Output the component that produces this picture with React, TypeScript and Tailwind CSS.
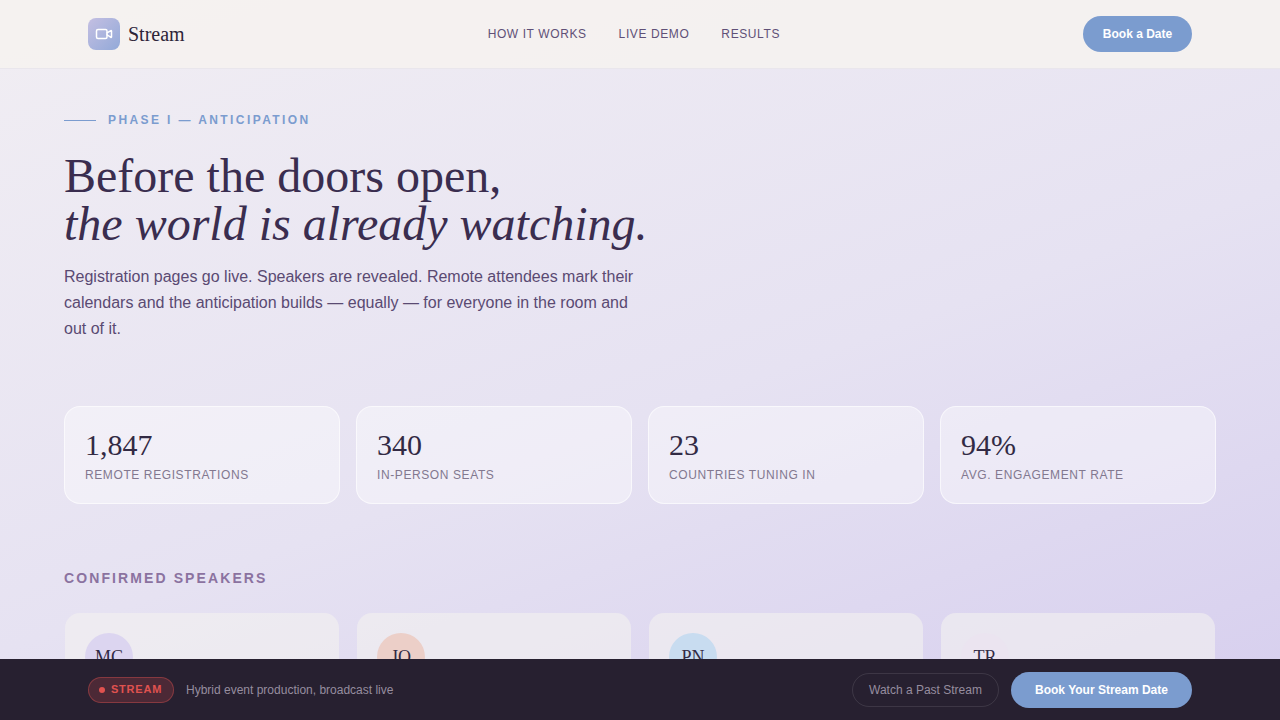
import { Video } from 'lucide-react';

const navLinks = ['HOW IT WORKS', 'LIVE DEMO', 'RESULTS'];

const stats = [
  { value: '1,847', label: 'REMOTE REGISTRATIONS' },
  { value: '340', label: 'IN-PERSON SEATS' },
  { value: '23', label: 'COUNTRIES TUNING IN' },
  { value: '94%', label: 'AVG. ENGAGEMENT RATE' },
];

const speakers = [
  { initials: 'MC', avatar: 'bg-[#dcd5f0]' },
  { initials: 'JO', avatar: 'bg-[#eccfc8]' },
  { initials: 'PN', avatar: 'bg-[#c8dcf0]' },
  { initials: 'TR', avatar: 'bg-[#ebe4f0]' },
];

const sans = "font-['Liberation_Sans',Arial,sans-serif]";
const serif = "font-['Liberation_Serif','Times_New_Roman',serif]";

const Nav = () => (
  <nav className="flex h-[69px] items-center justify-between border-b border-[#e9e6ec] bg-[#f5f2f0]/90 px-[88px]">
    <div className="flex items-center gap-2">
      <div className="flex h-8 w-8 items-center justify-center rounded-lg bg-gradient-to-br from-[#c4bfe2] to-[#92a9d8]">
        <Video size={18} color="#ffffff" strokeWidth={2} />
      </div>
      <span className={`${serif} text-xl text-[#2d2438]`}>Stream</span>
    </div>
    <div className={`${sans} flex items-center gap-8`}>
      {navLinks.map((link) => (
        <span key={link} className="text-xs tracking-[0.05em] text-[#5f5077]">
          {link}
        </span>
      ))}
    </div>
    <button className={`${sans} h-9 w-[109px] rounded-full bg-[#7b9ccf] text-xs font-bold text-white`}>
      Book a Date
    </button>
  </nav>
);

const Hero = () => (
  <section className="px-16 pt-11">
    <div className="flex items-center gap-3">
      <span className="h-px w-8 bg-[#7b9ccf]" />
      <span className={`${sans} text-xs font-bold leading-[14px] tracking-[0.2em] text-[#7b9ccf]`}>
        PHASE I — ANTICIPATION
      </span>
    </div>
    <h1 className={`${serif} mt-[25px] text-5xl font-normal leading-[48px] text-[#3a2d4f]`}>
      Before the doors open,
      <br />
      <em>the world is already watching.</em>
    </h1>
    <p className={`${sans} mt-4 w-[580px] text-base leading-[26px] text-[#5a4a72]`}>
      Registration pages go live. Speakers are revealed. Remote attendees mark their calendars and the anticipation
      builds — equally — for everyone in the room and out of it.
    </p>
  </section>
);

const Stats = () => (
  <section className="mt-[64px] grid grid-cols-4 gap-4 px-16">
    {stats.map((stat) => (
      <div key={stat.label} className="h-[98px] rounded-2xl border border-white/60 bg-white/40 px-5 pt-5">
        <div className={`${serif} text-[30px] leading-9 text-[#322a44]`}>{stat.value}</div>
        <div className={`${sans} mt-[4px] text-xs tracking-[0.05em] text-[#82788f]`}>{stat.label}</div>
      </div>
    ))}
  </section>
);

const Speakers = () => (
  <section className="mt-[66px] px-16">
    <h2 className={`${sans} text-sm font-bold leading-4 tracking-[0.15em] text-[#8b72a0]`}>CONFIRMED SPEAKERS</h2>
    <div className="mt-[26px] grid grid-cols-4 gap-4">
      {speakers.map((speaker) => (
        <div
          key={speaker.initials}
          className="h-[140px] rounded-2xl border border-transparent bg-[#f4f1f0]/60 bg-clip-padding p-5"
        >
          <div
            className={`${serif} ${speaker.avatar} flex h-12 w-12 items-center justify-center rounded-full text-lg text-[#322a44]`}
          >
            {speaker.initials}
          </div>
        </div>
      ))}
    </div>
  </section>
);

const BottomBar = () => (
  <div className={`${sans} fixed inset-x-0 bottom-0 flex h-[61px] items-center justify-between bg-[#272030] px-[88px]`}>
    <div className="flex items-center gap-3">
      <div className="flex h-[26px] w-[86px] items-center gap-[6px] rounded-full border border-[#e0524f]/40 bg-[#e0524f]/20 px-[10px]">
        <span className="h-[6px] w-[6px] rounded-full bg-[#e0524f]" />
        <span className="text-[11px] font-bold tracking-[0.07em] text-[#e0524f]">STREAM</span>
      </div>
      <span className="text-xs text-[#968d9f]">Hybrid event production, broadcast live</span>
    </div>
    <div className="flex items-center gap-3">
      <button className="h-[34px] w-[147px] rounded-full border border-white/10 text-xs text-[#968d9f]">
        Watch a Past Stream
      </button>
      <button className="h-9 w-[181px] rounded-full bg-[#7b9ccf] text-xs font-bold text-white">
        Book Your Stream Date
      </button>
    </div>
  </div>
);

const App = () => (
  <div className="h-screen overflow-hidden bg-[linear-gradient(160deg,#f1eef3_0%,#e6e2f2_55%,#d6ceee_100%)]">
    <Nav />
    <Hero />
    <Stats />
    <Speakers />
    <BottomBar />
  </div>
);

export default App;
